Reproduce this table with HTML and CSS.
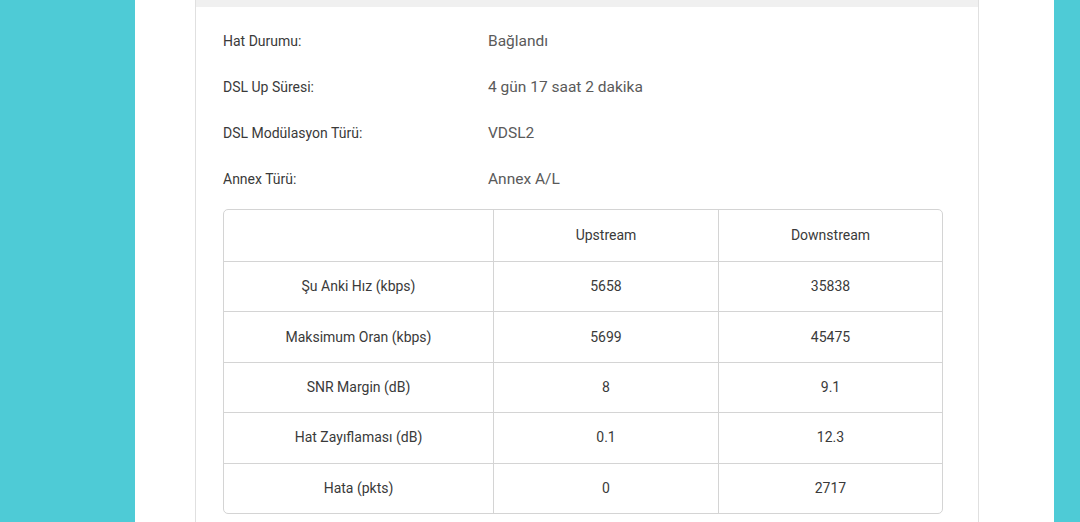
FILE: index.html
```html
<!DOCTYPE html>
<html lang="tr">
<head>
  <meta charset="UTF-8">
  <meta name="viewport" content="width=device-width,initial-scale=1">
  <title>DSL Durumu</title>
  <link rel="stylesheet" href="styles.css">
</head>

<body>
<div class="page">
  <div class="panel">
    <div class="card">
      <div class="card-head"></div>
      <div class="card-body">
        <div class="info-row">
          <span class="info-label">Hat Durumu:</span>
          <span class="info-value">Bağlandı</span>
        </div>
        <div class="info-row">
          <span class="info-label">DSL Up Süresi:</span>
          <span class="info-value">4 gün 17 saat 2 dakika</span>
        </div>
        <div class="info-row">
          <span class="info-label">DSL Modülasyon Türü:</span>
          <span class="info-value">VDSL2</span>
        </div>
        <div class="info-row">
          <span class="info-label">Annex Türü:</span>
          <span class="info-value">Annex A/L</span>
        </div>

        <div class="stats">
          <div class="stats-row">
            <div class="cell"></div>
            <div class="cell">Upstream</div>
            <div class="cell">Downstream</div>
          </div>
          <div class="stats-row">
            <div class="cell">Şu Anki Hız (kbps)</div>
            <div class="cell">5658</div>
            <div class="cell">35838</div>
          </div>
          <div class="stats-row">
            <div class="cell">Maksimum Oran (kbps)</div>
            <div class="cell">5699</div>
            <div class="cell">45475</div>
          </div>
          <div class="stats-row">
            <div class="cell">SNR Margin (dB)</div>
            <div class="cell">8</div>
            <div class="cell">9.1</div>
          </div>
          <div class="stats-row">
            <div class="cell">Hat Zayıflaması (dB)</div>
            <div class="cell">0.1</div>
            <div class="cell">12.3</div>
          </div>
          <div class="stats-row">
            <div class="cell">Hata (pkts)</div>
            <div class="cell">0</div>
            <div class="cell">2717</div>
          </div>
        </div>
      </div>
    </div>
  </div>
</div>
</body>
</html>
```

FILE: styles.css
```css
* {
  margin: 0;
  padding: 0;
  box-sizing: border-box;
}

html, body {
  height: 100%;
}

body {
  background-color: #4ecbd6;
  font-family: Roboto, "Liberation Sans", sans-serif;
  overflow: hidden;
}

.page {
  display: flex;
  height: 100%;
  padding: 0 26px 0 135px;
}

.panel {
  flex: 1;
  background-color: #fff;
  padding: 0 75px 0 60px;
}

.card {
  height: 100%;
  border-left: 1px solid #e0e0e0;
  border-right: 1px solid #e0e0e0;
}

.card-head {
  height: 7px;
  background-color: #f0f0f0;
}

.card-body {
  padding: 11px 35px 0 27px;
}

.info-row {
  display: flex;
  align-items: center;
  height: 46px;
}

.info-label {
  width: 265px;
  font-size: 14px;
  color: #3a3a3a;
}

.info-value {
  font-size: 15.5px;
  color: #5a5a5a;
}

.stats {
  margin-top: 7px;
  border: 1px solid #d4d4d4;
  border-radius: 5px;
  overflow: hidden;
}

.stats-row {
  display: grid;
  grid-template-columns: 269px 225px 1fr;
  height: 50.4px;
  border-top: 1px solid #d4d4d4;
}

.stats-row:first-child {
  border-top: none;
  height: 51px;
}

.cell {
  display: flex;
  align-items: center;
  justify-content: center;
  padding-bottom: 1px;
  font-size: 14px;
  color: #3a3a3a;
  border-left: 1px solid #d4d4d4;
}

.cell:first-child {
  border-left: none;
}
```
